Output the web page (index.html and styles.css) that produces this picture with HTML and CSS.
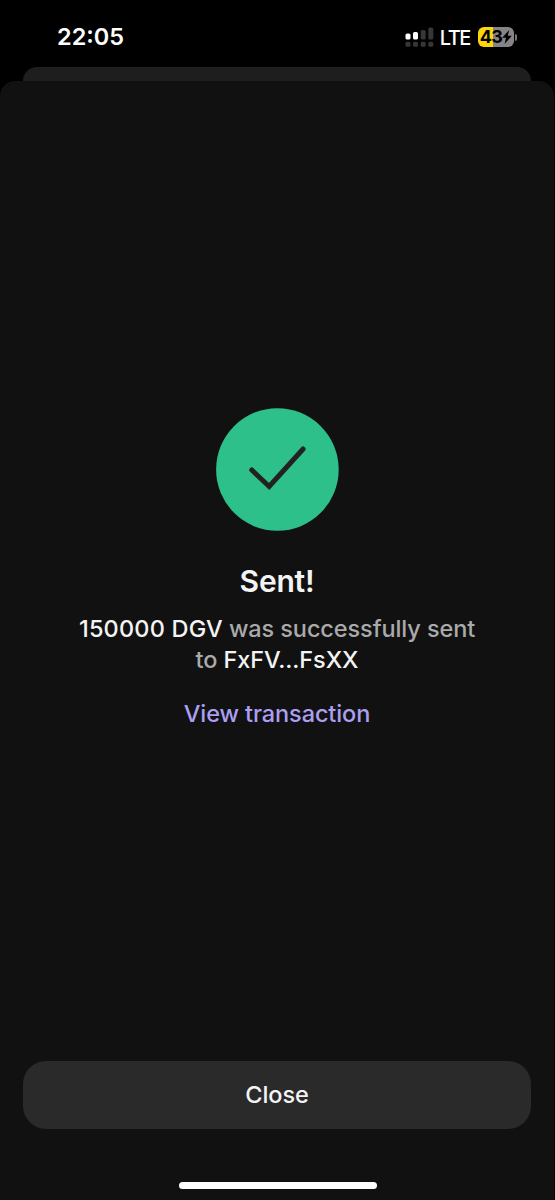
FILE: index.html
```html
<!DOCTYPE html>
<html lang="en">
<head>
  <meta charset="UTF-8">
  <meta name="viewport" content="width=device-width, initial-scale=1.0">
  <title>Sent</title>
  <link rel="stylesheet" href="styles.css">
</head>
<body>
  <div class="screen">
    <header class="status-bar">
      <div class="time">22:05</div>
      <div class="status-icons">
        <svg class="signal" width="29" height="21" viewBox="0 0 29 21">
          <g fill="#fff">
            <rect x="0.5" y="6.5" width="5" height="6" rx="1.6"/>
            <rect x="8" y="5" width="5" height="7.5" rx="1.6"/>
          </g>
          <g fill="#363636">
            <rect x="15.7" y="3" width="5" height="9.5" rx="1.6"/>
            <rect x="23.3" y="0.5" width="5" height="12" rx="1.6"/>
            <rect x="0.5" y="14.8" width="5" height="5" rx="1.6"/>
            <rect x="8" y="14.8" width="5" height="5" rx="1.6"/>
            <rect x="15.7" y="14.8" width="5" height="5" rx="1.6"/>
            <rect x="23.3" y="14.8" width="5" height="5" rx="1.6"/>
          </g>
        </svg>
        <span class="network">LTE</span>
        <div class="battery">
          <span class="battery-level">43</span>
          <svg class="bolt" width="10" height="14" viewBox="0 0 10 14">
            <path d="M7.2 0L0.2 7.8H4L2.6 14L9.8 5.8H5.8Z" fill="#000"/>
          </svg>
        </div>
        <div class="battery-cap"></div>
      </div>
    </header>

    <div class="back-sheet"></div>

    <main class="sheet">
      <section class="result">
        <svg class="check" width="124" height="124" viewBox="0 0 124 124">
          <circle cx="62.4" cy="62.5" r="61.3" fill="#2ec08b"/>
          <path d="M36.8 63L54.2 79.5L88.1 42" fill="none" stroke="#222" stroke-width="5" stroke-linecap="round"/>
        </svg>
        <h1>Sent!</h1>
        <p class="message"><span class="line"><b class="amount">150000 DGV</b> was successfully sent</span> <span class="line">to <b>FxFV...FsXX</b></span></p>
        <a class="link" href="#">View transaction</a>
      </section>
      <button class="close" type="button">Close</button>
      <div class="home-bar"></div>
    </main>
  </div>
</body>
</html>
```

FILE: styles.css
```css
* {
  box-sizing: border-box;
}
body {
  margin: 0;
  background-color: #000;
  color: #f4f4f4;
  font-family: Inter, "Liberation Sans", sans-serif;
}
.screen {
  display: flex;
  flex-direction: column;
  width: 555px;
  height: 1200px;
  overflow: hidden;
}
.status-bar {
  display: flex;
  justify-content: space-between;
  height: 67px;
  padding: 0 38px 0 57px;
}
.time {
  margin-top: 22px;
  color: #fff;
  font-size: 23.5px;
  font-weight: 600;
  line-height: 30px;
}
.status-icons {
  display: flex;
  align-items: center;
  height: 74px;
}
.signal {
  margin-right: 6px;
}
.network {
  margin: 1px 8px 0 0;
  color: #fff;
  font-size: 20px;
  font-weight: 500;
  letter-spacing: -1.4px;
}
.battery {
  display: flex;
  align-items: center;
  justify-content: center;
  width: 36px;
  height: 20px;
  border-radius: 6px;
  background: linear-gradient(to right, #fdd60a 43%, #858585 43%);
  color: #000;
}
.battery-level {
  font-size: 18px;
  font-weight: 700;
  line-height: 20px;
  letter-spacing: -0.7px;
}
.battery-cap {
  width: 2px;
  height: 7px;
  margin-left: 1px;
  border-radius: 0 2px 2px 0;
  background-color: #777;
}
.back-sheet {
  height: 14px;
  margin: 0 24px 0 23px;
  border-radius: 14px 14px 0 0;
  background-color: #1e1e1f;
}
.sheet {
  display: flex;
  flex: 1;
  flex-direction: column;
  align-items: center;
  width: 554px;
  border-radius: 15px 15px 0 0;
  background-color: #111;
}
.result {
  display: flex;
  flex: 1;
  flex-direction: column;
  align-items: center;
  padding-top: 326px;
  text-align: center;
}
h1 {
  margin: 31px 0 0;
  font-size: 30px;
  font-weight: 600;
  line-height: 38px;
  letter-spacing: -0.2px;
}
.message {
  margin: 13px 0 0;
  color: #aaa;
  font-size: 23.5px;
  font-weight: 550;
  line-height: 31px;
  letter-spacing: -0.1px;
}
.message b {
  color: #f4f4f4;
  font-weight: 550;
}
.message .amount {
  letter-spacing: 0.2px;
}
.line {
  display: block;
}
.link {
  margin-top: 23px;
  color: #ab9ff2;
  font-size: 23.5px;
  font-weight: 550;
  line-height: 31px;
  letter-spacing: -0.1px;
  text-decoration: none;
}
.close {
  width: 508px;
  height: 68px;
  padding: 0 0 2px;
  border: none;
  border-radius: 23px;
  background-color: #2a2a2a;
  color: #f4f4f4;
  font-family: inherit;
  font-size: 23.5px;
  font-weight: 550;
  letter-spacing: -0.1px;
  cursor: pointer;
}
.home-bar {
  width: 198px;
  height: 7px;
  margin: 53px 0 11px 1px;
  border-radius: 4px;
  background-color: #fff;
}
```
